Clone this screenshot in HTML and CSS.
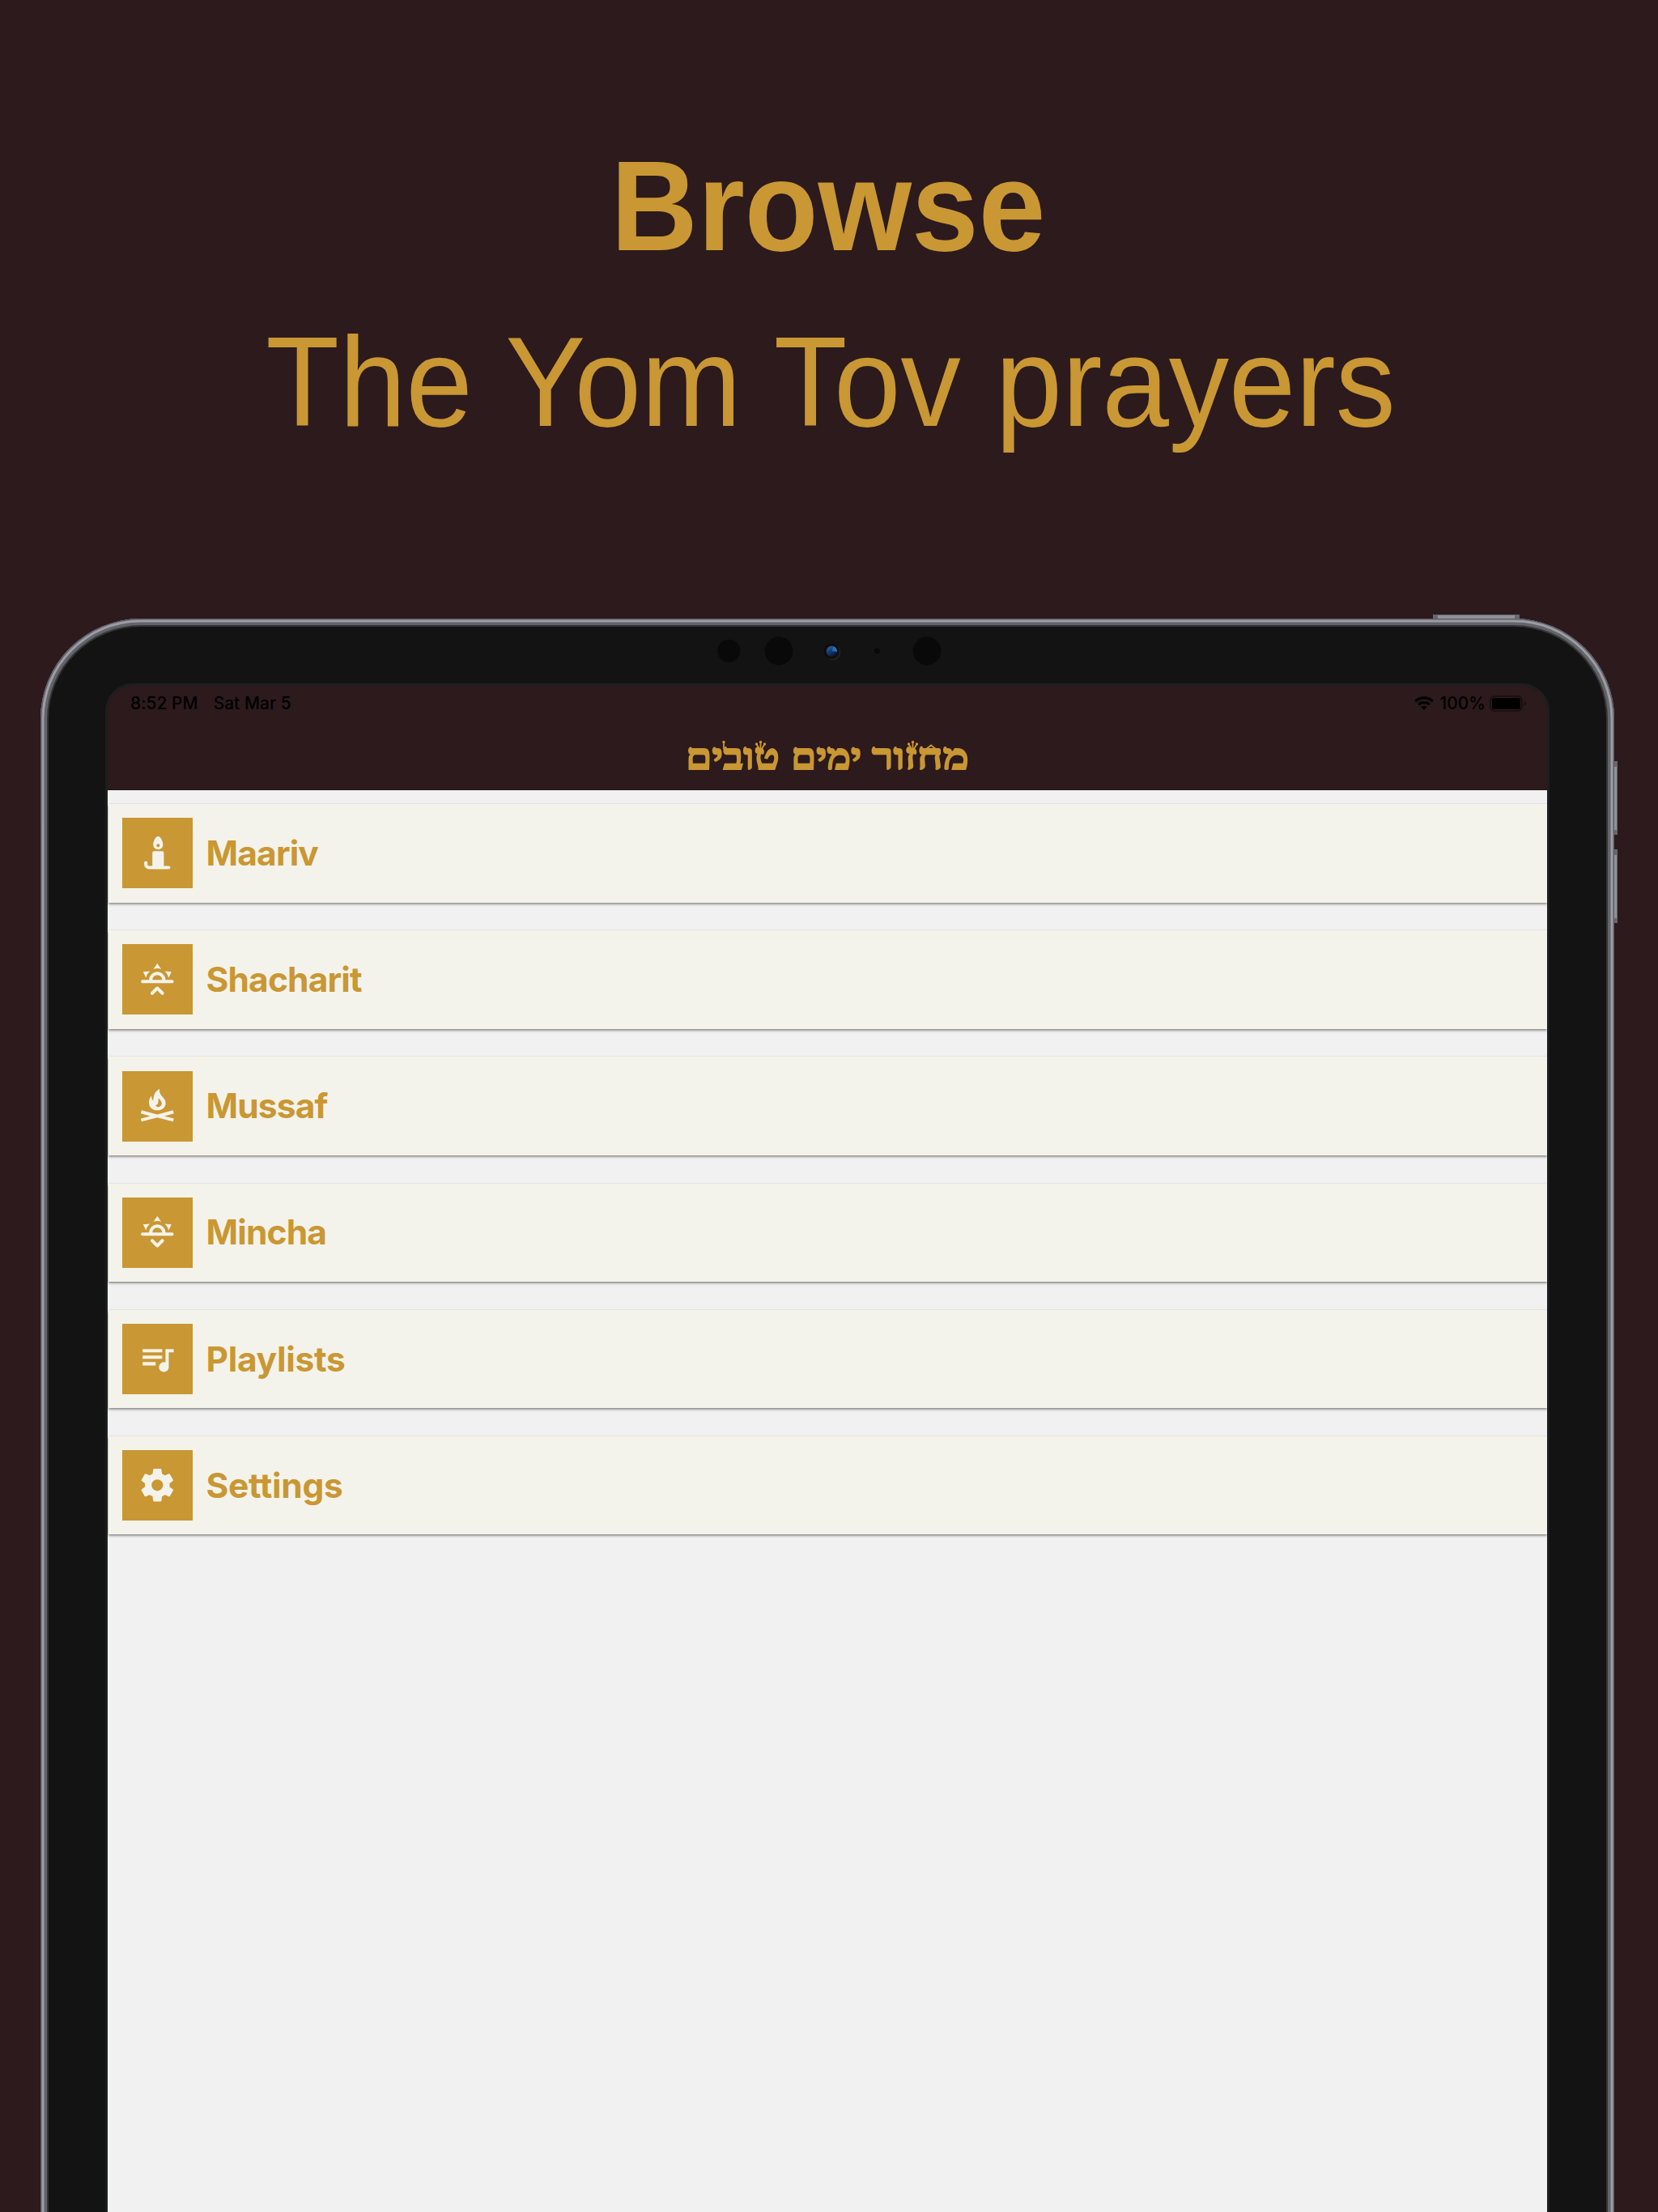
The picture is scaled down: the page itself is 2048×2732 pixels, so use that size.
FILE: index.html
```html
<!DOCTYPE html>
<html lang="en">
<head>
<meta charset="utf-8">
<title>Browse the Yom Tov prayers</title>
<link rel="stylesheet" href="styles.css">
</head>
<body>
<main class="page">
  <header class="headline">
    <h1 class="headline-title">Browse</h1>
    <p class="headline-sub">The Yom Tov prayers</p>
  </header>

  <section class="device">
    <span class="button button-power"></span>
    <span class="button button-side button-up"></span>
    <span class="button button-side button-down"></span>
    <div class="frame">
      <svg class="sensors" viewBox="0 0 274 40">
        <defs>
          <linearGradient id="lens" x1="0" y1="0" x2="0.6" y2="1">
            <stop offset="0" stop-color="#2d6ea8"/>
            <stop offset="0.5" stop-color="#163f74"/>
            <stop offset="1" stop-color="#0a1430"/>
          </linearGradient>
        </defs>
        <g fill="#090909">
          <circle cx="15.3" cy="20" r="14"/>
          <circle cx="77" cy="20" r="17.4"/>
          <circle cx="198.3" cy="20" r="3.5"/>
          <circle cx="260" cy="20" r="17.4"/>
        </g>
        <circle cx="144" cy="22" r="9.5" fill="#202020"/>
        <circle cx="142" cy="20" r="9.5" fill="#0d0d0d"/>
        <circle cx="142.5" cy="20.5" r="6.8" fill="url(#lens)"/>
        <path d="M143 20 L144 14.5 A6.5 6.5 0 0 1 149 21 Z" fill="#2b6db0"/>
      </svg>

      <div class="screen">
        <div class="app-bar">
          <div class="status">
            <span class="status-time">8:52 PM</span>
            <span class="status-date">Sat Mar 5</span>
            <svg class="wifi" viewBox="0 0 24 17">
              <path d="M1.3 6.2 A15.2 15.2 0 0 1 22.7 6.2" fill="none" stroke="#000" stroke-width="3.2"/>
              <path d="M5.2 10.2 A9.7 9.7 0 0 1 18.8 10.2" fill="none" stroke="#000" stroke-width="3"/>
              <path d="M12 17 L8.3 13.2 A5.3 5.3 0 0 1 15.7 13.2 Z"/>
            </svg>
            <span class="status-level">100%</span>
            <svg class="battery" viewBox="0 0 46 20">
              <rect x="1" y="1" width="39" height="18" rx="5.5" fill="none" stroke="#180e0f" stroke-width="1.7"/>
              <rect x="3" y="3" width="35" height="14" rx="3"/>
              <path d="M42.5 7 Q45 8 45 10 Q45 12 42.5 13 Z" fill="#180e0f"/>
            </svg>
          </div>
          <svg class="title" viewBox="0 0 360 50" lang="he">
            <g class="title-text">
              <text x="5" y="41" textLength="116" lengthAdjust="spacingAndGlyphs">טובים</text>
              <text x="135" y="41" textLength="87" lengthAdjust="spacingAndGlyphs">ימים</text>
              <text x="235" y="41" textLength="120" lengthAdjust="spacingAndGlyphs">מחזור</text>
            </g>
            <g class="title-crowns">
              <path d="M52 8V16M92.500 10L96 16M97.500 8V17M102.500 10L99 16M280.500 10L284 16M285.500 8V17M290.500 10L287 16M301 17L308 11.500L315 17"/>
              <g class="crown-dots">
                <circle cx="52" cy="7.500" r="1.700"/><circle cx="92.500" cy="10" r="1.700"/><circle cx="97.500" cy="7.500" r="1.700"/><circle cx="102.500" cy="10" r="1.700"/>
                <circle cx="280.500" cy="10" r="1.700"/><circle cx="285.500" cy="7.500" r="1.700"/><circle cx="290.500" cy="10" r="1.700"/>
              </g>
            </g>
          </svg>
        </div>

        <nav class="menu">
          <a class="row">
            <span class="tile"><svg class="icon" viewBox="0 0 24 24"><path d="M12.500 2C10.840 2 9.500 5.340 9.500 7A3 3 0 0 0 12.500 10A3 3 0 0 0 15.500 7C15.500 5.340 14.160 2 12.500 2M12.500 6.500A1 1 0 0 1 13.500 7.500A1 1 0 0 1 12.500 8.500A1 1 0 0 1 11.500 7.500A1 1 0 0 1 12.500 6.500M10 11A1 1 0 0 0 9 12V20H7A1 1 0 0 1 6 19V18A1 1 0 0 0 5 17A1 1 0 0 0 4 18V19A3 3 0 0 0 7 22H19A1 1 0 0 0 20 21A1 1 0 0 0 19 20H16V12A1 1 0 0 0 15 11H10Z"/></svg></span>
            <span class="label">Maariv</span>
          </a>
          <a class="row">
            <span class="tile"><svg class="icon" viewBox="0 0 24 24"><path d="M3,12H7A5,5 0 0,1 12,7A5,5 0 0,1 17,12H21A1,1 0 0,1 22,13A1,1 0 0,1 21,14H3A1,1 0 0,1 2,13A1,1 0 0,1 3,12M15,12A3,3 0 0,0 12,9A3,3 0 0,0 9,12H15M12,2L14.39,5.42C13.65,5.15 12.84,5 12,5C11.16,5 10.35,5.15 9.61,5.42L12,2M3.34,7L7.5,6.65C6.9,7.16 6.36,7.78 5.94,8.5C5.5,9.24 5.25,10 5.11,10.79L3.34,7M20.65,7L18.88,10.79C18.74,10 18.47,9.23 18.05,8.5C17.63,7.78 17.1,7.15 16.5,6.64L20.65,7M12.71,16.3L15.82,19.41C16.21,19.8 16.21,20.43 15.82,20.82C15.43,21.21 14.8,21.21 14.41,20.82L12,18.41L9.59,20.82C9.2,21.21 8.57,21.21 8.18,20.82C7.79,20.43 7.79,19.8 8.18,19.41L11.29,16.3C11.5,16.1 11.74,16 12,16C12.26,16 12.5,16.1 12.71,16.3Z"/></svg></span>
            <span class="label">Shacharit</span>
          </a>
          <a class="row">
            <span class="tile"><svg class="icon" viewBox="0 0 24 24"><path fill-rule="evenodd" d="M13.400 1.400C13.100 3.500 13.800 4.800 15.200 6.300C16.400 7.500 17.100 8.700 17.100 10.100C17.100 12.700 14.900 14.500 12 14.500C9.100 14.500 6.900 12.600 6.900 9.700C6.900 8 7.400 6.600 8.500 5.500C8.400 6.900 8.700 7.800 9.500 8.700C9.700 5.400 10.300 3.300 13.400 1.400ZM12.600 7C12.900 8.300 12.500 9 12.500 9.700C12.500 10.600 11.700 11.200 10.900 11.500C11.400 12.200 12 12.500 12.700 12.500C13.900 12.400 14.700 11.500 14.700 10.300C14.600 9 13.800 7.900 12.600 7Z"/><path d="M2.400 14.500L12 17.050L21.600 14.500L22.100 16.400L16.300 18L22.100 19.500L21.600 21.400L12 18.900L2.400 21.400L1.900 19.500L7.700 18L1.900 16.400Z"/></svg></span>
            <span class="label">Mussaf</span>
          </a>
          <a class="row">
            <span class="tile"><svg class="icon" viewBox="0 0 24 24"><path d="M3,12H7A5,5 0 0,1 12,7A5,5 0 0,1 17,12H21A1,1 0 0,1 22,13A1,1 0 0,1 21,14H3A1,1 0 0,1 2,13A1,1 0 0,1 3,12M15,12A3,3 0 0,0 12,9A3,3 0 0,0 9,12H15M12,2L14.39,5.42C13.65,5.15 12.84,5 12,5C11.16,5 10.35,5.15 9.61,5.42L12,2M3.34,7L7.5,6.65C6.9,7.16 6.36,7.78 5.94,8.5C5.5,9.24 5.25,10 5.11,10.79L3.34,7M20.65,7L18.88,10.79C18.74,10 18.47,9.23 18.05,8.5C17.63,7.78 17.1,7.15 16.5,6.64L20.65,7M12.71,20.71L15.82,17.6C16.21,17.21 16.21,16.57 15.82,16.18C15.43,15.79 14.8,15.79 14.41,16.18L12,18.59L9.59,16.18C9.2,15.79 8.57,15.79 8.18,16.18C7.79,16.57 7.79,17.21 8.18,17.6L11.29,20.71C11.5,20.9 11.74,21 12,21C12.26,21 12.5,20.9 12.71,20.71Z"/></svg></span>
            <span class="label">Mincha</span>
          </a>
          <a class="row">
            <span class="tile"><svg class="icon" viewBox="0 0 24 24"><path d="M15,6H3V8H15V6M15,10H3V12H15V10M3,16H11V14H3V16M17,6V14.18C16.69,14.07 16.35,14 16,14A3,3 0 0,0 13,17A3,3 0 0,0 16,20A3,3 0 0,0 19,17V8H22V6H17Z"/></svg></span>
            <span class="label label-wide">Playlists</span>
          </a>
          <a class="row">
            <span class="tile"><svg class="icon" viewBox="0 0 24 24"><path d="M12,15.5A3.5,3.5 0 0,1 8.5,12A3.5,3.5 0 0,1 12,8.5A3.5,3.5 0 0,1 15.5,12A3.5,3.5 0 0,1 12,15.5M19.43,12.97C19.47,12.65 19.5,12.33 19.5,12C19.5,11.67 19.47,11.34 19.43,11L21.54,9.37C21.73,9.22 21.78,8.95 21.66,8.73L19.66,5.27C19.54,5.05 19.27,4.96 19.05,5.05L16.56,6.05C16.04,5.66 15.5,5.32 14.87,5.07L14.5,2.42C14.46,2.18 14.25,2 14,2H10C9.75,2 9.54,2.18 9.5,2.42L9.13,5.07C8.5,5.32 7.96,5.66 7.44,6.05L4.95,5.05C4.73,4.96 4.46,5.05 4.34,5.27L2.34,8.73C2.21,8.95 2.27,9.22 2.46,9.37L4.57,11C4.53,11.34 4.5,11.67 4.5,12C4.5,12.33 4.53,12.65 4.57,12.97L2.46,14.63C2.27,14.78 2.21,15.05 2.34,15.27L4.34,18.73C4.46,18.95 4.73,19.03 4.95,18.95L7.44,17.94C7.96,18.34 8.5,18.68 9.13,18.93L9.5,21.58C9.54,21.82 9.75,22 10,22H14C14.25,22 14.46,21.82 14.5,21.58L14.87,18.93C15.5,18.67 16.04,18.34 16.56,17.94L19.05,18.95C19.27,19.03 19.54,18.95 19.66,18.73L21.66,15.27C21.78,15.05 21.73,14.78 21.54,14.63L19.43,12.97Z"/></svg></span>
            <span class="label label-wide">Settings</span>
          </a>
        </nav>
      </div>
    </div>
  </section>
</main>
</body>
</html>
```
FILE: styles.css
```css
* { box-sizing: border-box; }

body {
  margin: 0;
  background: #2c1a1c;
}

.page {
  display: flex;
  flex-direction: column;
  width: 2048px;
  height: 2732px;
  overflow: hidden;
  background: #2c1a1c;
}

/* Headline */
.headline {
  flex: none;
  height: 764px;
  padding-top: 144px;
  color: #c99733;
  font-family: "Liberation Sans", Arial, sans-serif;
  text-align: center;
}

.headline-title,
.headline-sub {
  margin: 0;
  height: 217px;
  font-size: 148.600px;
  line-height: 219px;
  white-space: nowrap;
  transform: scaleY(1.067);
}

.headline-title {
  padding-right: 2px;
  font-weight: 700;
}

.headline-sub {
  padding-left: 4px;
  font-weight: 400;
  word-spacing: 2px;
  letter-spacing: -0.200px;
}

/* Tablet body */
.device {
  position: relative;
  flex: none;
  width: 1944px;
  height: 2200px;
  margin-left: 50px;
}

.frame {
  position: relative;
  display: flex;
  flex-direction: column;
  align-items: center;
  height: 100%;
  padding-top: 20px;
  border-radius: 124px;
  background: #131313;
  box-shadow:
    inset 0 0 0 1.5px #5d5d65,
    inset 0 0 0 4.5px #9b9ca5,
    inset 0 0 0 8px #636468,
    inset 0 0 0 10px #363637;
}

.button {
  position: absolute;
  background: #8f9197;
  border: 1px solid #66686c;
}

.button-power {
  top: -5px;
  left: 1720px;
  width: 107px;
  height: 8px;
  border-width: 1px 6px;
}

.button-side {
  left: 1940px;
  width: 8px;
  height: 91px;
  border-width: 7px 1px 6px;
}

.button-up { top: 176px; }
.button-down { top: 285px; }

.sensors {
  flex: none;
  width: 274px;
  height: 40px;
  overflow: visible;
}

.screen {
  display: flex;
  flex-direction: column;
  flex: none;
  width: 1784px;
  height: 2000px;
  margin-top: 20px;
  border: 3px solid #1b1f1f;
  border-radius: 34px;
  background: #2c1a1c;
  overflow: hidden;
}

.app-bar {
  flex: none;
  height: 129px;
}

/* Status bar */
.status {
  display: flex;
  align-items: center;
  height: 43px;
  padding: 0 25px 0 28px;
  color: #000;
  font: 500 20.800px/43px Inter, sans-serif;
  letter-spacing: 0.100px;
}

.status-date {
  margin-left: 19px;
  margin-right: auto;
}

.wifi {
  width: 24px;
  height: 17px;
  margin-right: 7px;
}

.battery {
  width: 46px;
  height: 20px;
  margin-left: 5px;
}

/* App title */
.title {
  display: block;
  width: 360px;
  height: 50px;
  margin: 19px auto 0 709px;
  overflow: visible;
}

.title-text {
  fill: #c99733;
  stroke: #c99733;
  stroke-width: 1.800;
  font: 700 45.500px "Liberation Serif", "DejaVu Sans", serif;
}

.title-crowns {
  fill: none;
  stroke: #c99733;
  stroke-width: 1.800;
}

.crown-dots {
  fill: #c99733;
  stroke: none;
}

/* Menu */
.menu {
  display: flex;
  flex: 1;
  flex-direction: column;
  gap: 34.700px;
  padding: 17px 0 0 1px;
  background: #f1f1f1;
}

.row {
  display: flex;
  align-items: center;
  flex: none;
  height: 121.500px;
  padding-left: 16.500px;
  background: #f4f3eb;
  box-shadow:
    0 1.700px 3px rgba(0, 0, 0, 0.5),
    0 -1px 1px rgba(0, 0, 0, 0.04);
}

.tile {
  display: flex;
  align-items: center;
  justify-content: center;
  width: 87px;
  height: 87px;
  background: #c99733;
}

.icon {
  width: 48.600px;
  height: 48.600px;
  fill: #f4f3eb;
}

.label {
  margin-left: 17px;
  color: #c99733;
  font: 700 42.500px/60px Inter, sans-serif;
  letter-spacing: -0.850px;
}

.label-wide { letter-spacing: -0.300px; }
```
